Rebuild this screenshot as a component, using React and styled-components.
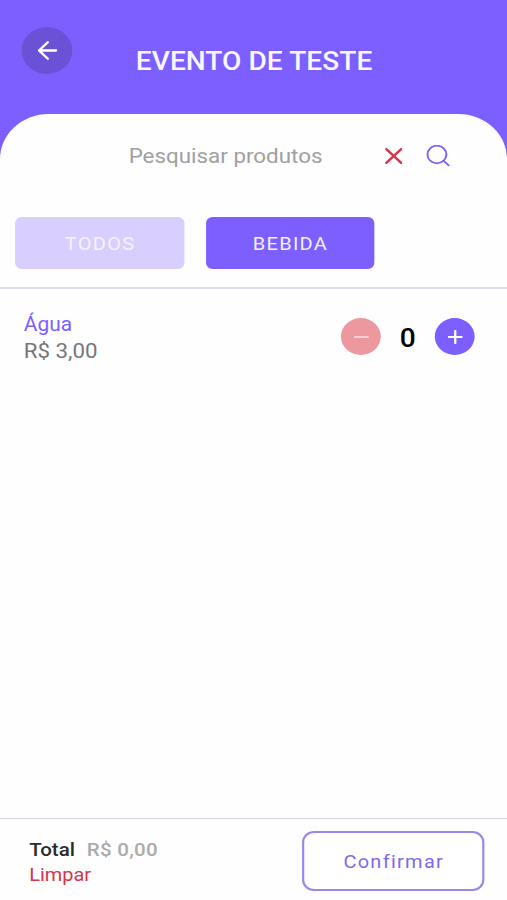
import React, { useState } from 'react';
import styled, { createGlobalStyle } from 'styled-components';


const PURPLE = "#7d5fff";
const RED = "#d63447";

const GlobalStyle = createGlobalStyle`
    html, body {
        margin: 0;
        overflow: hidden;
        background-color: #fefefe;
    }

    * {
        box-sizing: border-box;
    }

    button, input {
        font-family: inherit;
        padding: 0;
        border: none;
    }
`;

const formatPrice = value => `R$ ${value.toFixed(2).replace(".", ",")}`;

function App() {
    const [category, setCategory] = useState("BEBIDA");
    const [search, setSearch] = useState("");
    const [amount, setAmount] = useState(0);

    return (
        <Screen>
            <GlobalStyle />
            <Header>
                <BackButton aria-label="Voltar">
                    <svg width="18" height="19" viewBox="0 0 18 19" fill="none" stroke="#fff" strokeWidth="2.3" strokeLinecap="round" strokeLinejoin="round">
                        <path d="M17 9.5H1.2M9.3 1.3L1.2 9.5l8.1 8.2" />
                    </svg>
                </BackButton>
                <Title>EVENTO DE TESTE</Title>
            </Header>
            <Content>
                <SearchBar>
                    <SearchInput
                        placeholder="Pesquisar produtos"
                        value={search}
                        onChange={event => setSearch(event.target.value)}
                    />
                    <IconButton aria-label="Apagar" onClick={() => setSearch("")}>
                        <svg width="16" height="16" viewBox="0 0 16 16" fill="none" stroke={RED} strokeWidth="2.2" strokeLinecap="round">
                            <path d="M1.1 1.1l13.8 13.8M14.9 1.1L1.1 14.9" />
                        </svg>
                    </IconButton>
                    <IconButton aria-label="Buscar">
                        <svg width="22" height="22" viewBox="0 0 22 22" fill="none" stroke={PURPLE} strokeWidth="1.8" strokeLinecap="round">
                            <circle cx="10" cy="9.5" r="8.8" />
                            <path d="M16.2 15.8l4.7 4.5" />
                        </svg>
                    </IconButton>
                </SearchBar>
                <Categories>
                    {["TODOS", "BEBIDA"].map(name => (
                        <Category key={name} $active={name === category} onClick={() => setCategory(name)}>
                            {name}
                        </Category>
                    ))}
                </Categories>
                <Product>
                    <div>
                        <ProductName>Água</ProductName>
                        <ProductPrice>{formatPrice(3)}</ProductPrice>
                    </div>
                    <Counter>
                        <RoundButton
                            aria-label="Remover"
                            $color={amount === 0 ? "#ed979f" : RED}
                            onClick={() => setAmount(Math.max(0, amount - 1))}
                        >
                            <svg width="14" height="14" viewBox="0 0 14 14" stroke="#fff" strokeOpacity={amount === 0 ? 0.7 : 1} strokeWidth="1.7" strokeLinecap="round">
                                <path d="M.9 7h12.2" />
                            </svg>
                        </RoundButton>
                        <Amount>{amount}</Amount>
                        <RoundButton aria-label="Adicionar" $color={PURPLE} onClick={() => setAmount(amount + 1)}>
                            <svg width="14" height="14" viewBox="0 0 14 14" stroke="#fff" strokeWidth="2.1" strokeLinecap="round">
                                <path d="M1 7h12M7 1v12" />
                            </svg>
                        </RoundButton>
                    </Counter>
                </Product>
            </Content>
            <Footer>
                <div>
                    <Total>
                        Total<TotalValue>{formatPrice(amount * 3)}</TotalValue>
                    </Total>
                    <ClearButton onClick={() => setAmount(0)}>Limpar</ClearButton>
                </div>
                <ConfirmButton>Confirmar</ConfirmButton>
            </Footer>
        </Screen>
    );
}

const Screen = styled.div`
    display: flex;
    flex-direction: column;
    width: 470px;
    height: 900px;
    transform: scaleX(1.0788);
    transform-origin: 0 0;
    background-color: ${PURPLE};
    font-family: Roboto, sans-serif;
`;

const Header = styled.header`
    display: grid;
    grid-template-columns: 47px 1fr 47px;
    height: 113.5px;
    padding: 27px 20px 0;
`;

const BackButton = styled.button`
    display: flex;
    align-items: center;
    justify-content: center;
    width: 47px;
    height: 47px;
    border-radius: 50%;
    background-color: #6b51d6;
`;

const Title = styled.h1`
    margin: 18px 0 0 1px;
    font-size: 26px;
    line-height: 32px;
    font-weight: 500;
    letter-spacing: 0.05px;
    text-align: center;
    white-space: nowrap;
    color: #f8f6ff;
`;

const Content = styled.main`
    flex: 1;
    border-radius: 45px 45px 0 0;
    background-color: #fefefe;
`;

const SearchBar = styled.div`
    display: flex;
    align-items: center;
    height: 85px;
    padding: 0 53.4px 0 61.6px;
`;

const SearchInput = styled.input`
    flex: 1;
    min-width: 0;
    height: 30px;
    outline: none;
    background: transparent;
    font-size: 20.75px;
    text-align: center;
    color: #444;

    &::placeholder {
        color: #a0a0a0;
        opacity: 1;
    }
`;

const IconButton = styled.button`
    display: flex;
    background: transparent;

    & + & {
        margin-left: 22px;
    }
`;

const Categories = styled.div`
    display: flex;
    gap: 20px;
    height: 90.5px;
    padding: 18px 14px 0;
    border-bottom: 2px solid #e0daf8;
`;

const Category = styled.button`
    width: 156.5px;
    height: 52px;
    padding: 2px 0 0 1px;
    border-radius: 6px;
    background-color: ${props => props.$active ? PURPLE : "#d8cfff"};
    color: ${props => props.$active ? "#f3f0ff" : "#f6f3ff"};
    font-size: 18.5px;
    letter-spacing: 1.2px;
`;

const Product = styled.div`
    display: flex;
    justify-content: space-between;
    padding: 22px 30px 0 22px;
    line-height: 27px;
`;

const ProductName = styled.div`
    font-size: 19.4px;
    color: ${PURPLE};
`;

const ProductPrice = styled.div`
    font-size: 20.7px;
    color: #777;
`;

const Counter = styled.div`
    display: flex;
    align-items: center;
    height: 37px;
    margin-top: 7px;
`;

const RoundButton = styled.button`
    display: flex;
    align-items: center;
    justify-content: center;
    width: 37px;
    height: 37px;
    border-radius: 50%;
    background-color: ${props => props.$color};
`;

const Amount = styled.span`
    width: 50px;
    padding-top: 4px;
    font-size: 26px;
    font-weight: 500;
    text-align: center;
    color: #000;
`;

const Footer = styled.footer`
    display: flex;
    justify-content: space-between;
    height: 82px;
    padding: 11.5px 21px 0 27px;
    border-top: 1px solid #d8d2f3;
    background-color: #fefefe;
`;

const Total = styled.div`
    margin-top: 6px;
    font-size: 19px;
    line-height: 26px;
    font-weight: 500;
    color: #2c2c2c;
`;

const TotalValue = styled.span`
    margin-left: 11px;
    letter-spacing: 0.25px;
    color: #ababab;
`;

const ClearButton = styled.button`
    display: block;
    background: transparent;
    font-size: 18.5px;
    line-height: 25px;
    color: ${RED};
`;

const ConfirmButton = styled.button`
    width: 169px;
    height: 60.5px;
    padding: 2px 0 0 1px;
    border: 2px solid #9a86ee;
    border-radius: 11px;
    background-color: #fff;
    color: #8069e8;
    font-size: 18.5px;
    letter-spacing: 1.2px;
`;

export default App;
